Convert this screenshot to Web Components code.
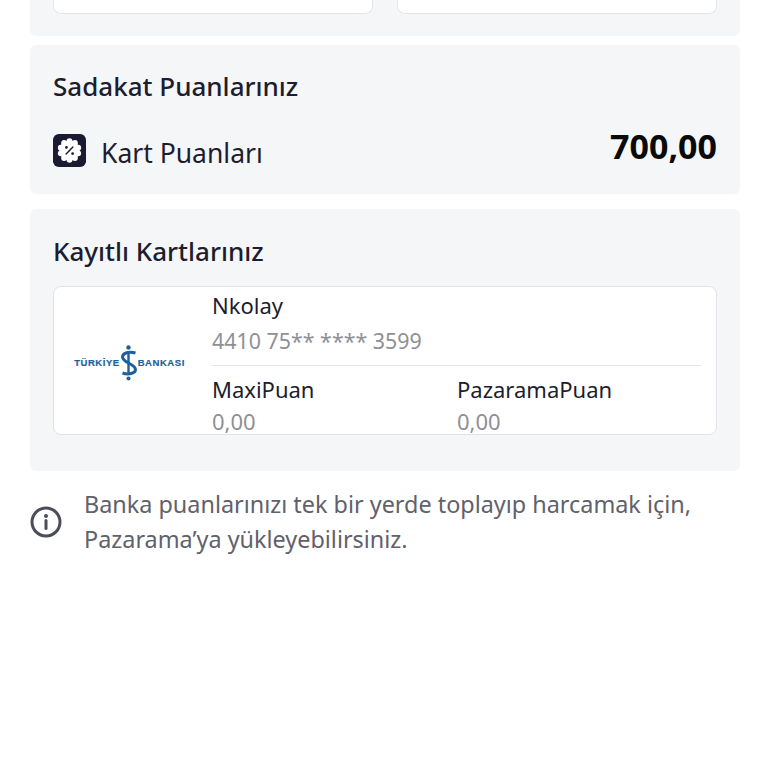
<!DOCTYPE html>
<html lang="tr">
<head>
<meta charset="utf-8">
<title>Puanlar</title>
<style>
  html, body { margin: 0; background: #fff; }
  body { font-family: "Noto Sans", "Open Sans", sans-serif; color: #1c1d2e; width: 768px; height: 768px; overflow: hidden; }
</style>
</head>
<body>
<points-page>
  <top-stub></top-stub>
  <points-panel heading="Sadakat Puanlarınız" style="margin-top:9px">
    <loyalty-row label="Kart Puanları" value="700,00"></loyalty-row>
  </points-panel>
  <points-panel heading="Kayıtlı Kartlarınız" style="margin-top:15px" class="cards">
    <saved-card name="Nkolay" number="4410 75** **** 3599">
      <card-point label="MaxiPuan" value="0,00"></card-point>
      <card-point label="PazaramaPuan" value="0,00"></card-point>
    </saved-card>
  </points-panel>
  <info-note>Banka puanlarınızı tek bir yerde toplayıp harcamak için, Pazarama’ya yükleyebilirsiniz.</info-note>
</points-page>

<script>
class PointsPage extends HTMLElement {
    constructor() {
        super();
        this.attachShadow({mode: 'open'}).innerHTML = `<style>
          :host { display: flex; flex-direction: column; padding: 0 28px 0 30px; }
        </style><slot></slot>`;
    }
}

// the two cards of the section above, scrolled almost out of view
class TopStub extends HTMLElement {
    constructor() {
        super();
        this.attachShadow({mode: 'open'}).innerHTML = `<style>
          :host { display: grid; grid-template-columns: 1fr 1fr; gap: 24px; height: 14px; padding: 0 23px 22px; background: #f5f6f8; border-radius: 0 0 6px 6px; }
          div { background: #fff; border: 1px solid #e3e5ea; border-top: 0; border-radius: 0 0 8px 8px; }
        </style><div></div><div></div>`;
    }
}

class PointsPanel extends HTMLElement {
    constructor() {
        super();
        this.attachShadow({mode: 'open'}).innerHTML = `<style>
          :host { display: block; background: #f5f6f8; border-radius: 6px; padding: 24px 23px 22px; }
          :host(.cards) { padding-top: 25px; padding-bottom: 36px; }
          h2 { margin: 0; font: 500 26px/34px "Noto Sans", sans-serif; color: #1c1d2e; }
        </style><h2></h2><slot></slot>`;
    }
    connectedCallback() {
        this.shadowRoot.querySelector('h2').textContent = this.getAttribute('heading');
    }
}

class LoyaltyRow extends HTMLElement {
    constructor() {
        super();
        this.attachShadow({mode: 'open'}).innerHTML = `<style>
          :host { display: flex; align-items: center; margin-top: 29px; height: 40px; }
          svg { width: 33px; height: 33px; flex: none; margin-top: -3px; }
          .label { font-size: 26.500px; line-height: 34px; margin-left: 15px; color: #1c1d2e; flex: 1; margin-top: 1px; }
          .value { font-size: 34px; font-weight: 700; line-height: 40px; color: #0a0a0a; margin-top: -12px; }
        </style>
        <svg viewBox="0 0 34 34">
          <rect width="34" height="34" rx="6" fill="#1a1b33"/>
          <g fill="#fff">
            <circle cx="17" cy="17" r="10.500"/>
            <circle cx="17" cy="7.500" r="3"/><circle cx="22.600" cy="9.300" r="3"/><circle cx="26" cy="14.100" r="3"/>
            <circle cx="26" cy="19.900" r="3"/><circle cx="22.600" cy="24.700" r="3"/><circle cx="17" cy="26.500" r="3"/>
            <circle cx="11.400" cy="24.700" r="3"/><circle cx="8" cy="19.900" r="3"/><circle cx="8" cy="14.100" r="3"/>
            <circle cx="11.400" cy="9.300" r="3"/>
          </g>
          <path d="M13.500 20.500l7-7" stroke="#1a1b33" stroke-width="1.500" stroke-linecap="round"/>
          <circle cx="13.800" cy="13.800" r="1.400" fill="#1a1b33"/>
          <circle cx="20.200" cy="20.200" r="1.400" fill="#1a1b33"/>
        </svg>
        <span class="label"></span><span class="value"></span>`;
    }
    connectedCallback() {
        this.shadowRoot.querySelector('.label').textContent = this.getAttribute('label');
        this.shadowRoot.querySelector('.value').textContent = this.getAttribute('value');
    }
}

class BankLogo extends HTMLElement {
    constructor() {
        super();
        this.attachShadow({mode: 'open'}).innerHTML = `<style>
          :host { display: flex; align-items: center; justify-content: center; gap: 0; padding: 5px 7px 0 0; color: #1f5f9c; font: 700 9.500px/12px "Liberation Sans", sans-serif; letter-spacing: .55px; -webkit-text-stroke: .2px #1f5f9c; }
          svg { width: 18px; height: 36px; flex: none; }
        </style>
        <span>TÜRKİYE</span>
        <svg viewBox="0 0 18 36" fill="none" stroke="#1f5f9c">
          <circle cx="8.500" cy="2.500" r="2.200" fill="#1f5f9c" stroke="none"/>
          <path stroke-width="2.400" d="M8.500 6v24"/>
          <path stroke-width="3" d="M15.500 8C9 6 2.500 8 2.500 12c0 5.500 13 7 13 12.500 0 4-7 5.500-13 3.500"/>
          <circle cx="8.500" cy="33.500" r="2" fill="#1f5f9c" stroke="none"/>
        </svg>
        <span>BANKASI</span>`;
    }
}

class SavedCard extends HTMLElement {
    constructor() {
        super();
        this.attachShadow({mode: 'open'}).innerHTML = `<style>
          :host { display: grid; grid-template-columns: 158px 1fr; height: 147px; margin-top: 18px; background: #fff; border: 1px solid #e1e3e8; border-radius: 8px; }
          .info { padding: 2px 15px 0 0; }
          .name { font-size: 22px; line-height: 32px; color: #1c1d2e; }
          .num { font-size: 21.400px; line-height: 32px; color: #8e9096; margin-top: 4px; padding-bottom: 8px; border-bottom: 1px solid #e3e5ea; }
          .points { display: grid; grid-template-columns: 245px 1fr; margin-top: 7px; }
        </style>
        <bank-logo></bank-logo>
        <div class="info">
          <div class="name"></div>
          <div class="num"></div>
          <div class="points"><slot></slot></div>
        </div>`;
    }
    connectedCallback() {
        this.shadowRoot.querySelector('.name').textContent = this.getAttribute('name');
        this.shadowRoot.querySelector('.num').textContent = this.getAttribute('number');
    }
}

class CardPoint extends HTMLElement {
    constructor() {
        super();
        this.attachShadow({mode: 'open'}).innerHTML = `<style>
          :host { display: block; }
          .l { font-size: 22px; line-height: 32px; color: #1c1d2e; }
          .v { font-size: 22px; line-height: 24px; margin-top: 4px; color: #8e9096; }
        </style><div class="l"></div><div class="v"></div>`;
    }
    connectedCallback() {
        this.shadowRoot.querySelector('.l').textContent = this.getAttribute('label');
        this.shadowRoot.querySelector('.v').textContent = this.getAttribute('value');
    }
}

class InfoNote extends HTMLElement {
    constructor() {
        super();
        this.attachShadow({mode: 'open'}).innerHTML = `<style>
          :host { display: flex; align-items: center; gap: 22px; margin-top: 16px; font-size: 23.400px; line-height: 35px; color: #5f616b; }
          svg { width: 32px; height: 32px; flex: none; }
        </style>
        <svg viewBox="0 0 32 32" fill="none">
          <circle cx="16" cy="16" r="14" stroke="#4c4d5a" stroke-width="3"/>
          <circle cx="16" cy="10" r="2" fill="#4c4d5a"/>
          <path d="M16 14.500v8" stroke="#4c4d5a" stroke-width="3" stroke-linecap="round"/>
        </svg>
        <span><slot></slot></span>`;
    }
}

customElements.define('points-page', PointsPage);
customElements.define('top-stub', TopStub);
customElements.define('points-panel', PointsPanel);
customElements.define('loyalty-row', LoyaltyRow);
customElements.define('bank-logo', BankLogo);
customElements.define('saved-card', SavedCard);
customElements.define('card-point', CardPoint);
customElements.define('info-note', InfoNote);
</script>
</body>
</html>
